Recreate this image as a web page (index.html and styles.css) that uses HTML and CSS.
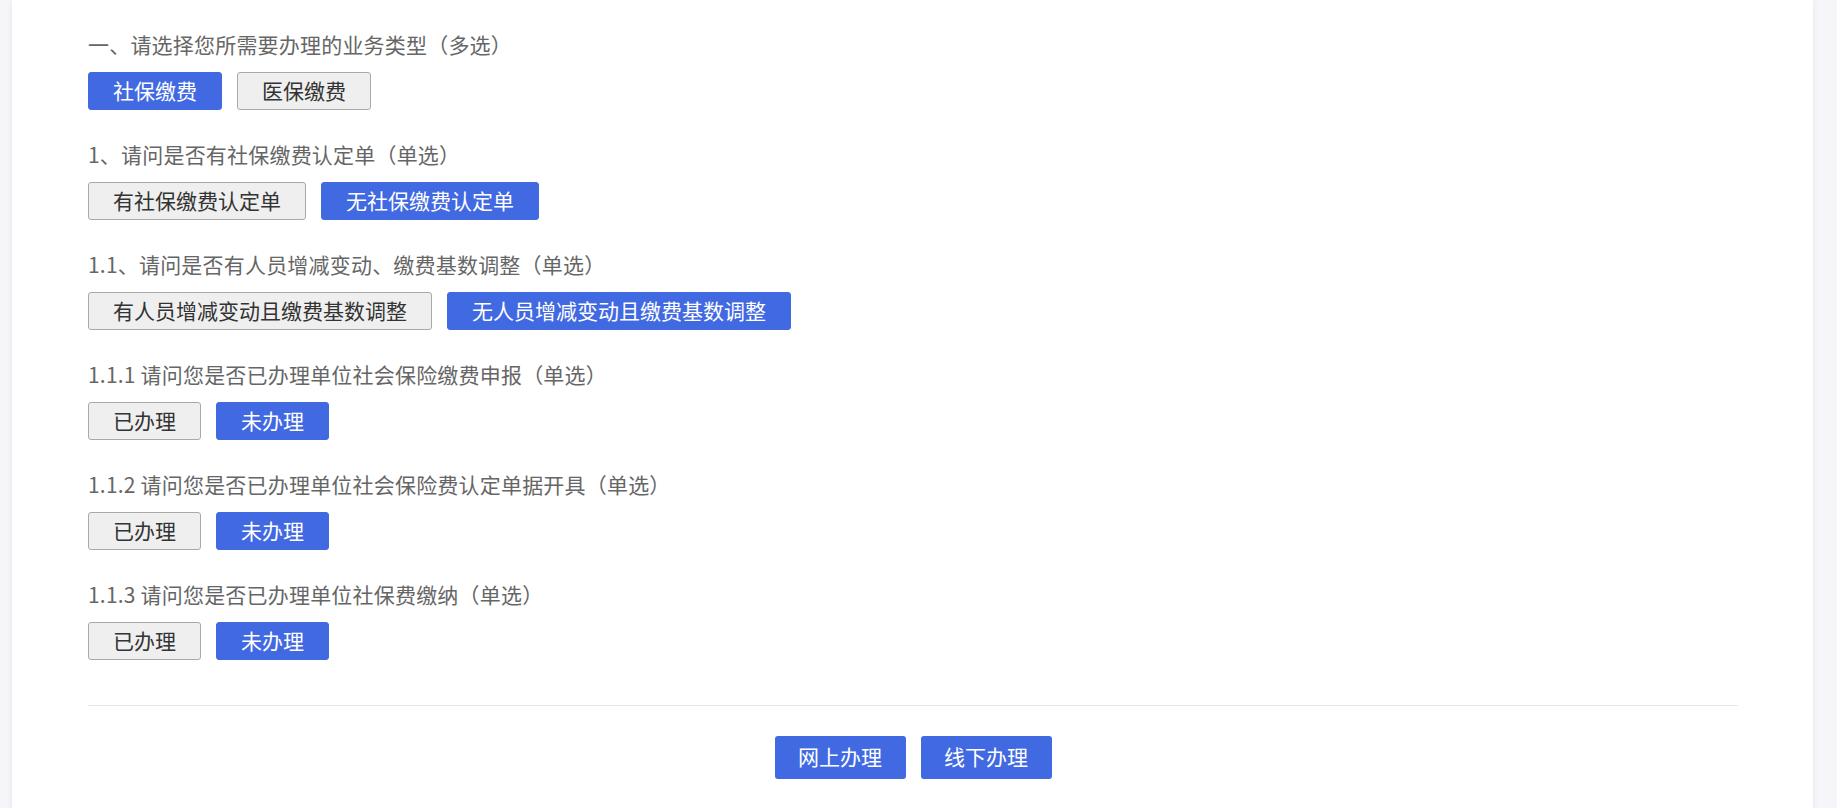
FILE: index.html
```html
<!DOCTYPE html>
<html lang="zh-CN">
<head>
<meta charset="utf-8">
<title>业务类型选择</title>
<link rel="stylesheet" href="styles.css">
</head>
<body>
<div class="card">
  <div class="section">
    <div class="question">一、请选择您所需要办理的业务类型（多选）</div>
    <div class="options">
      <button class="opt active">社保缴费</button>
      <button class="opt">医保缴费</button>
    </div>
  </div>
  <div class="section">
    <div class="question">1、请问是否有社保缴费认定单（单选）</div>
    <div class="options">
      <button class="opt">有社保缴费认定单</button>
      <button class="opt active">无社保缴费认定单</button>
    </div>
  </div>
  <div class="section">
    <div class="question">1.1、请问是否有人员增减变动、缴费基数调整（单选）</div>
    <div class="options">
      <button class="opt">有人员增减变动且缴费基数调整</button>
      <button class="opt active">无人员增减变动且缴费基数调整</button>
    </div>
  </div>
  <div class="section">
    <div class="question">1.1.1 请问您是否已办理单位社会保险缴费申报（单选）</div>
    <div class="options">
      <button class="opt">已办理</button>
      <button class="opt active">未办理</button>
    </div>
  </div>
  <div class="section">
    <div class="question">1.1.2 请问您是否已办理单位社会保险费认定单据开具（单选）</div>
    <div class="options">
      <button class="opt">已办理</button>
      <button class="opt active">未办理</button>
    </div>
  </div>
  <div class="section">
    <div class="question">1.1.3 请问您是否已办理单位社保费缴纳（单选）</div>
    <div class="options">
      <button class="opt">已办理</button>
      <button class="opt active">未办理</button>
    </div>
  </div>
  <div class="footer">
    <button class="action">网上办理</button>
    <button class="action">线下办理</button>
  </div>
</div>
</body>
</html>
```

FILE: styles.css
```css
html, body {
  margin: 0;
  padding: 0;
}

body {
  background: #f6f6fa;
  font-family: "Microsoft YaHei", "Noto Sans CJK SC", sans-serif;
  height: 808px;
  overflow: hidden;
}

.card {
  margin-left: 12px;
  width: 1801px;
  box-sizing: border-box;
  background: #fff;
  box-shadow: 0 0 7px rgba(40, 50, 110, 0.09);
  padding: 29px 75px 60px 76px;
  min-height: 808px;
}

.section {
  margin-bottom: 29px;
}

.question {
  font-size: 21px;
  letter-spacing: 0.2px;
  line-height: 30px;
  height: 30px;
  color: #666;
  margin-bottom: 13px;
  white-space: nowrap;
}

.options {
  display: flex;
  gap: 15px;
}

.opt {
  box-sizing: border-box;
  height: 38px;
  padding: 0 24px 2px;
  font-family: inherit;
  font-size: 21px;
  line-height: 34px;
  color: #333;
  background: #efefef;
  border: 1px solid #a9a9a9;
  border-radius: 3px;
  white-space: nowrap;
  margin: 0;
}

.opt.active {
  background: #4169e1;
  border-color: #4169e1;
  color: #fff;
}

.footer {
  margin-top: 45px;
  border-top: 1px solid #e8e8e8;
  padding-top: 30px;
  display: flex;
  justify-content: center;
  gap: 15px;
}

.action {
  box-sizing: border-box;
  width: 131px;
  height: 43px;
  padding: 0 0 2px;
  font-family: inherit;
  font-size: 21px;
  line-height: 41px;
  color: #fff;
  background: #4169e1;
  border: none;
  border-radius: 3px;
  margin: 0;
}
```
